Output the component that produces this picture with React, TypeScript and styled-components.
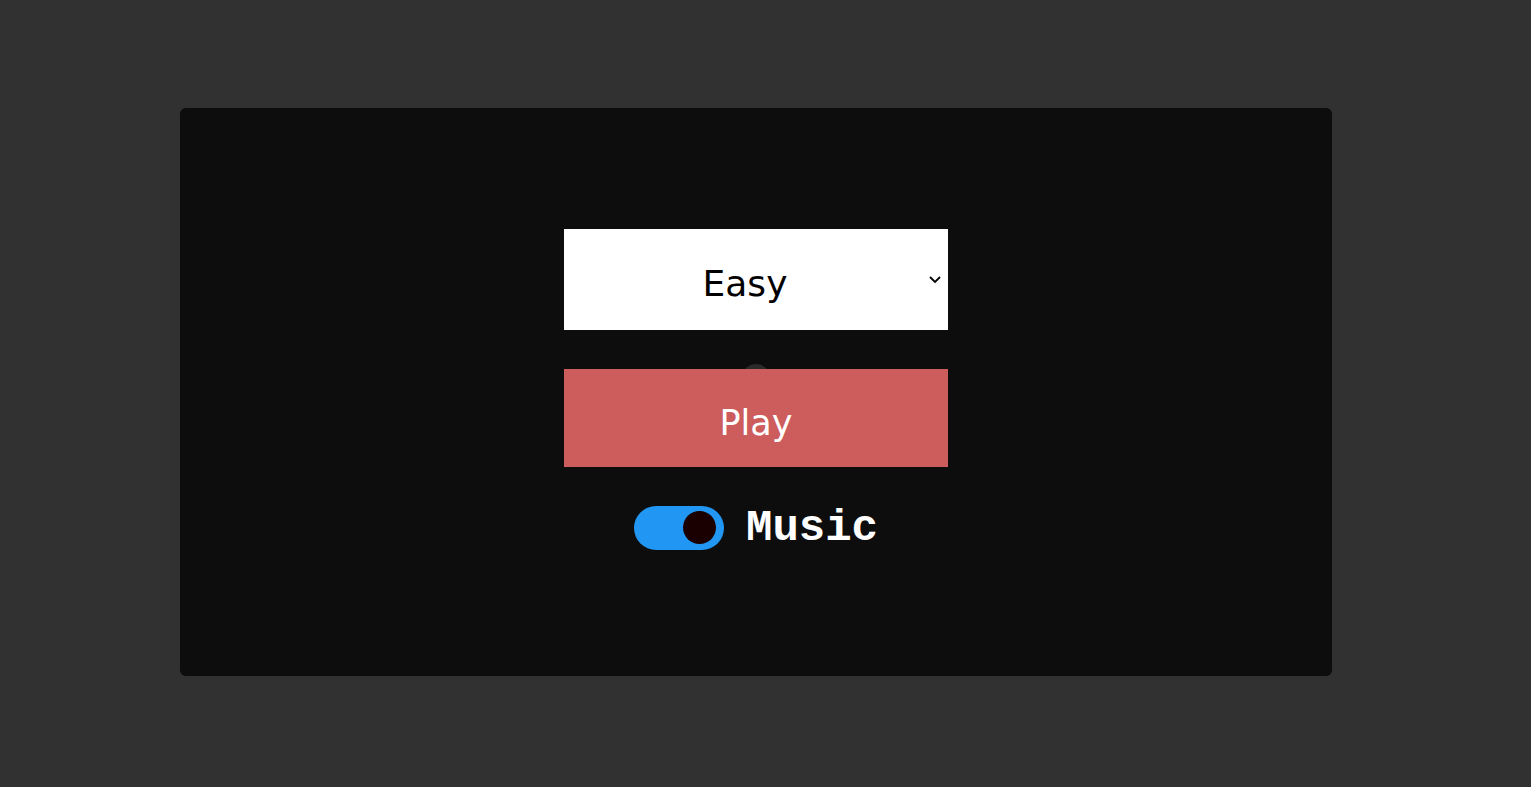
import React, { useState } from 'react';
import styled, { createGlobalStyle } from 'styled-components';

const GlobalStyle = createGlobalStyle`
  html, body {
    margin: 0;
    padding: 0;
    background: #313131;
  }
  body {
    font-family: 'Comic Sans MS', 'DejaVu Sans', sans-serif;
  }
`;

const Page = styled.div`
  min-height: 787px;
  padding: 108px 199px 111px 180px;
  box-sizing: border-box;
`;

const Card = styled.div`
  background: #0d0d0d;
  border-radius: 6px;
  height: 568px;
  display: flex;
  flex-direction: column;
  align-items: center;
  justify-content: center;
  gap: 39px;
  padding-bottom: 4px;
  box-sizing: border-box;
`;

const SelectWrap = styled.div`
  position: relative;
  width: 384px;
  height: 101px;
`;

const Select = styled.select`
  appearance: none;
  width: 100%;
  height: 100%;
  border: none;
  border-radius: 0;
  background: #ffffff;
  color: #000000;
  font-family: 'Comic Sans MS', 'DejaVu Sans', sans-serif;
  font-size: 36px;
  text-align: center;
  text-align-last: center;
  padding: 8px 22px 0 0;
  outline: none;
  cursor: pointer;
`;

const Chevron = styled.svg`
  position: absolute;
  right: 6px;
  top: 45px;
  pointer-events: none;
`;

const PlayWrap = styled.div`
  position: relative;
  width: 384px;
  height: 98px;
`;

const Knob = styled.div`
  position: absolute;
  left: 178px;
  top: -5px;
  width: 28px;
  height: 28px;
  border-radius: 50%;
  background: #2a2a2a;
`;

const PlayButton = styled.button`
  position: relative;
  width: 100%;
  height: 100%;
  border: none;
  padding: 10px 0 0;
  background: #cd5c5c;
  color: #ffffff;
  font-family: 'Comic Sans MS', 'DejaVu Sans', sans-serif;
  font-size: 35px;
  cursor: pointer;
`;

const ToggleRow = styled.label`
  display: flex;
  align-items: center;
  gap: 22px;
  margin-top: -2px;
  cursor: pointer;
`;

const Track = styled.span<{ $on: boolean }>`
  position: relative;
  width: 90px;
  height: 44px;
  border-radius: 22px;
  background: ${p => (p.$on ? '#2196f3' : '#555555')};
  display: flex;
  align-items: center;
  justify-content: ${p => (p.$on ? 'flex-end' : 'flex-start')};
  padding: 0 8px;
  box-sizing: border-box;
`;

const Thumb = styled.span`
  width: 33px;
  height: 33px;
  border-radius: 50%;
  background: #1a0000;
`;

const HiddenCheck = styled.input`
  display: none;
`;

const Label = styled.span`
  font-family: 'Liberation Mono', 'Courier New', monospace;
  font-weight: 700;
  font-size: 44px;
  color: #ffffff;
  line-height: 48px;
`;

export default function App() {
  const [level, setLevel] = useState('easy');
  const [music, setMusic] = useState(true);

  return (
    <>
      <GlobalStyle />
      <Page>
        <Card>
          <SelectWrap>
            <Select value={level} onChange={e => setLevel(e.target.value)}>
              <option value="easy">Easy</option>
              <option value="medium">Medium</option>
              <option value="hard">Hard</option>
            </Select>
            <Chevron width="14" height="10" viewBox="0 0 14 10">
              <path d="M2 3 L7 8 L12 3" fill="none" stroke="#000" strokeWidth="1.8" />
            </Chevron>
          </SelectWrap>
          <PlayWrap>
            <Knob />
            <PlayButton>Play</PlayButton>
          </PlayWrap>
          <ToggleRow>
            <HiddenCheck type="checkbox" checked={music} onChange={e => setMusic(e.target.checked)} />
            <Track $on={music}>
              <Thumb />
            </Track>
            <Label>Music</Label>
          </ToggleRow>
        </Card>
      </Page>
    </>
  );
}
